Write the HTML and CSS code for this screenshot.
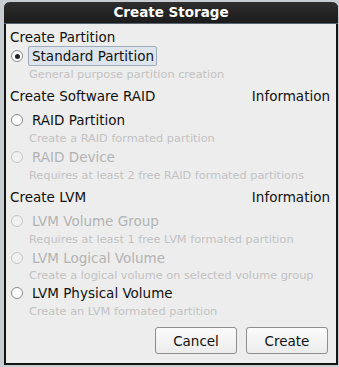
FILE: index.html
```html
<!DOCTYPE html>
<html lang="en">
  <head>
    <meta charset="UTF-8" />
    <title>Create Storage</title>
    <link rel="stylesheet" href="styles.css">
  </head>
  <body>
    <div class="dialog">
      <header class="titlebar">Create Storage</header>
      <main class="content">
        <h2 class="gruppe">Create Partition</h2>
        <label class="valg">
          <span class="radio valgt"></span>
          <span class="navn fokus">Standard Partition</span>
        </label>
        <p class="beskrivelse">General purpose partition creation</p>

        <h2 class="gruppe">Create Software RAID <span class="info">Information</span></h2>
        <label class="valg forste">
          <span class="radio"></span>
          <span class="navn">RAID Partition</span>
        </label>
        <p class="beskrivelse">Create a RAID formated partition</p>
        <label class="valg inaktiv">
          <span class="radio"></span>
          <span class="navn">RAID Device</span>
        </label>
        <p class="beskrivelse">Requires at least 2 free RAID formated partitions</p>

        <h2 class="gruppe">Create LVM <span class="info">Information</span></h2>
        <label class="valg forste inaktiv">
          <span class="radio"></span>
          <span class="navn">LVM Volume Group</span>
        </label>
        <p class="beskrivelse">Requires at least 1 free LVM formated partition</p>
        <label class="valg inaktiv">
          <span class="radio"></span>
          <span class="navn">LVM Logical Volume</span>
        </label>
        <p class="beskrivelse kort">Create a logical volume on selected volume group</p>
        <label class="valg">
          <span class="radio"></span>
          <span class="navn">LVM Physical Volume</span>
        </label>
        <p class="beskrivelse">Create an LVM formated partition</p>

        <div class="knapper">
          <button>Cancel</button>
          <button>Create</button>
        </div>
      </main>
    </div>
  </body>
</html>
```

FILE: styles.css
```css
* {
  box-sizing: border-box;
}

body {
  margin: 0;
  height: 367px;
  background: #c9ccd0;
  font-family: "DejaVu Sans", sans-serif;
  overflow: hidden;
}

.dialog {
  margin: 2px 1px 0 4px;
  height: 363px;
  display: flex;
  flex-direction: column;
  border: 2px solid #141414;
  border-top: none;
  border-radius: 6px 6px 0 0;
  background: #ededed;
}

.titlebar {
  height: 22px;
  background: linear-gradient(#2e2e2e, #1b1b1b);
  border-radius: 6px 6px 0 0;
  border-bottom: 1px solid #5a6470;
  color: white;
  font-weight: bold;
  font-size: 13.5px;
  text-align: center;
  line-height: 21px;
  margin: 0 -2px;
}

.content {
  padding: 4px 6px 0 4px;
  flex: 1;
}

.gruppe {
  display: flex;
  justify-content: space-between;
  margin: 4px 0 0;
  font-size: 13.5px;
  font-weight: normal;
  color: #111;
  height: 18px;
  line-height: 18px;
}

.gruppe:first-child {
  margin-top: 0;
}

.info {
  color: #111;
}

.valg {
  display: flex;
  align-items: center;
  height: 20px;
  gap: 6px;
  font-size: 13.5px;
  color: #111;
}

.valg.forste {
  margin-top: 5px;
}

.radio {
  width: 12px;
  height: 12px;
  border: 1px solid #8a8a8a;
  border-radius: 50%;
  background: white;
  margin-left: 1px;
  display: flex;
  align-items: center;
  justify-content: center;
}

.radio.valgt::after {
  content: "";
  width: 5px;
  height: 5px;
  border-radius: 50%;
  background: #222;
}

.navn {
  padding: 1px 2px 1px 3px;
  border: 1px solid transparent;
  margin-left: -1px;
}

.fokus {
  background: #dde4ec;
  border-color: #9eabbc;
  border-radius: 2px;
}

.inaktiv {
  color: #b3b3b3;
}

.inaktiv .radio {
  border-color: #c6c6c6;
  background: #f0f0f0;
}

.beskrivelse {
  margin: 0 0 0 19px;
  font-size: 11.3px;
  color: #c2c2c2;
  height: 17px;
  line-height: 17px;
}

.beskrivelse.kort {
  height: 15px;
  line-height: 15px;
}

.knapper {
  display: flex;
  justify-content: flex-end;
  gap: 9px;
  margin-top: 7px;
  padding-right: 2px;
}

button {
  width: 82px;
  height: 27px;
  font-family: "DejaVu Sans", sans-serif;
  font-size: 13.5px;
  color: #111;
  background: linear-gradient(#fbfbfb, #ececec);
  border: 1px solid #8e8e8e;
  border-radius: 3px;
}
```
